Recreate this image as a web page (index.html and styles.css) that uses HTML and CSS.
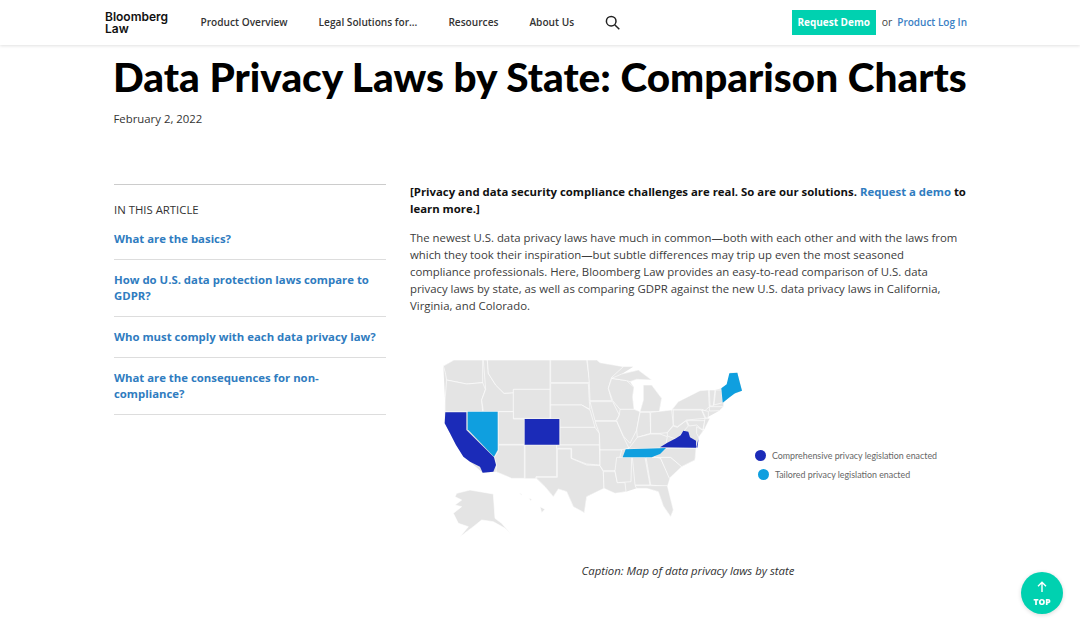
FILE: index.html
```html
<!DOCTYPE html>
<html lang="en">
<head>
<meta charset="utf-8">
<title>Data Privacy Laws by State: Comparison Charts</title>
<link rel="stylesheet" href="styles.css">
</head>
<body>
<header class="topbar">
  <a class="logo">Bloomberg<br>Law</a>
  <nav class="nav">
    <a>Product Overview</a>
    <a>Legal Solutions for...</a>
    <a>Resources</a>
    <a>About Us</a>
    <svg class="search" viewBox="0 0 16 16" width="16" height="16"><circle cx="6.2" cy="6.2" r="4.8"/><path d="M9.7 9.7l4.6 4.6"/></svg>
  </nav>
  <div class="actions">
    <a class="demo">Request Demo</a>
    <span class="or">or</span>
    <a class="login">Product Log In</a>
  </div>
</header>
<main class="page">
  <h1 class="title">Data Privacy Laws by State: Comparison Charts</h1>
  <p class="date">February 2, 2022</p>
  <div class="columns">
    <aside class="toc">
      <div class="toc-head">IN THIS ARTICLE</div>
      <a>What are the basics?</a>
      <a>How do U.S. data protection laws compare to GDPR?</a>
      <a>Who must comply with each data privacy law?</a>
      <a>What are the consequences for non-compliance?</a>
    </aside>
    <article class="article">
      <p class="lead">[Privacy and data security compliance challenges are real. So are our solutions. <a>Request a demo</a> to learn more.]</p>
      <p class="body">The newest U.S. data privacy laws have much in common—both with each other and with the laws from which they took their inspiration—but subtle differences may trip up even the most seasoned compliance professionals. Here, Bloomberg Law provides an easy-to-read comparison of U.S. data privacy laws by state, as well as comparing GDPR against the new U.S. data privacy laws in California, Virginia, and Colorado.</p>
      <figure class="figure">
        <div class="graphic">
          <svg class="map" viewBox="0 0 960 600" width="320" height="200">
            <path class="base" d="M40 48L72 30H500L510 38 580 50 610 50 575 72 625 60 665 90 620 88 600 95 612 112 608 140 612 178 630 185 640 150 640 105 665 105 695 145 688 185 725 180 745 155 810 122 855 120 875 115 897 100 900 68H922L936 122 905 135 880 158V170L868 182 835 200 825 235 806 262 798 295 795 330 755 350 718 385 712 410 730 480 722 500 700 468 685 425 650 415 620 415 588 425 555 430 522 415 470 440 463 488 430 470 410 425 385 417 370 440 345 410 318 385H245L198 365 158 368 120 335 78 285 44 220 45 150Z"/>
            <g class="st">
              <path d="M40 48L72 30H158V98L110 102 60 92 50 90 46 68Z"/>
              <path d="M50 90L60 92 110 102 158 98 166 118 155 150 158 185H45V150Z"/>
              <path d="M160 30H172L175 70 197 105 222 130 250 128V185H160L155 150 167 118Z"/>
              <path d="M172 30H360V118H250V128L222 130 197 105 175 70Z"/>
              <path d="M250 118H360V205H250Z"/>
              <path d="M205 185H250V207H283V283H205Z"/>
              <path d="M205 285H283V385H245L198 365 200 345 193 322 205 303Z"/>
              <path d="M285 285H380V380H318V386H285Z"/>
              <path d="M362 30H470L480 98H362Z"/>
              <path d="M362 100H475L478 155 480 178 455 165H362Z"/>
              <path d="M362 165H455L480 180 495 232H390V207H362Z"/>
              <path d="M390 232H495L508 250V285H390Z"/>
              <path d="M380 285H508L510 345 470 342 425 325V295H380Z"/>
              <path d="M382 297H423V325L470 345 510 347 520 365 522 415 470 440 463 488 430 470 410 425 385 417 370 440 345 410 320 385H318V382H382Z"/>
              <path d="M472 30H500L510 38 580 50 545 82 535 115 545 152H480L478 100Z"/>
              <path d="M480 155H548L568 195 558 212H495Z"/>
              <path d="M495 214H560L580 260 597 295 570 300H510L508 250Z"/>
              <path d="M510 300H575L565 340 555 362H520L510 347Z"/>
              <path d="M520 365H555L562 398H585L588 425 555 430 522 415Z"/>
              <path d="M545 85L590 92 612 112 608 140 612 178H570L548 152 535 115Z"/>
              <path d="M570 178H612L630 185 620 240 600 280 580 258 560 212 568 195Z"/>
              <path d="M575 72L625 60 665 90 620 88 600 95 590 92 545 85Z"/>
              <path d="M640 105L665 105 695 145 688 185H630L640 150Z"/>
              <path d="M630 187H660L662 250 622 262 620 240Z"/>
              <path d="M662 187 725 180 730 225 712 248 690 250 662 250Z"/>
              <path d="M597 295L622 262 662 252 690 252 712 260 708 282 690 294 587 298Z"/>
              <path d="M560 322H605L603 395 562 398 555 362Z"/>
              <path d="M607 322H645L660 405 615 405Z"/>
              <path d="M648 322H690L720 385 712 410 662 405Z"/>
              <path d="M615 407H712L730 480 722 500 700 468 685 425 650 415 620 415Z"/>
              <path d="M680 322H722L755 350 718 385 692 325Z"/>
              <path d="M670 322L708 295H798L795 330 755 350 722 322Z"/>
              <path d="M712 248 730 228 742 232 768 212 775 228 740 268 712 258Z"/>
              <path d="M730 180H815L825 205 770 210 742 230 730 226Z"/>
              <path d="M725 180 745 155 810 122 835 120 838 170 825 182 815 178H732Z"/>
              <path d="M770 212H825L818 240 800 225 778 228Z"/>
              <path d="M838 120H855L850 168H840Z"/>
              <path d="M857 120H875L878 158 852 165Z"/>
              <path d="M838 170H880L868 182 838 183Z"/>
              <path d="M816 180L835 184 835 200 828 205Z"/>
              <path d="M825 205H840L825 235 820 240Z"/>
              <path d="M800 230 820 242 806 262 800 250Z"/>
              <path d="M80 430L120 420 190 432 195 505 215 520 245 555 225 535 190 515 155 510 130 530 90 560 115 530 85 520 70 490 95 470 75 465 95 450 75 440Z"/>
              <path d="M268 430L276 432 274 436ZM296 444L306 448 302 452ZM330 470L345 478 335 488Z"/>
            </g>
            <path class="tl" d="M874 115L890 103 898 70 922 68 930 100 936 122 915 130 895 145 878 158Z"/>
            <path class="dk" d="M46 187H109V240L192 322 198 345 190 365 158 368 150 350 120 335 100 320 78 285 60 250 44 220Z"/>
            <path class="tl" d="M113 185H203V300L192 320 113 238Z"/>
            <path class="dk" d="M284 207H388V284H284Z"/>
            <path class="dk" d="M690 292L712 278 738 265 752 256 760 242 775 245 780 262 798 272 798 293Z"/>
            <path class="tl" d="M587 298 690 295 708 294 690 312 665 322H578Z"/>
            <path class="dk" d="M806 264L802 293 799 292Z"/>
          </svg>
          <ul class="legend">
            <li><span class="dot dot-dark"></span>Comprehensive privacy legislation enacted</li>
            <li class="legend-alt"><span class="dot dot-light"></span>Tailored privacy legislation enacted</li>
          </ul>
        </div>
        <figcaption class="caption">Caption: Map of data privacy laws by state</figcaption>
      </figure>
    </article>
  </div>
</main>
<a class="top-btn">
  <svg viewBox="0 0 12 12" width="12" height="12"><path d="M6 11V1.5M2 5.2L6 1.2l4 4"/></svg>
  <span>TOP</span>
</a>
</body>
</html>
```
FILE: styles.css
```css
* { box-sizing: border-box; }
html, body { margin: 0; height: 620px; overflow: hidden; }
body { background: #fff; color: #333; font-family: "Open Sans", sans-serif; font-size: 11.36px; }

.topbar {
  display: flex; align-items: center; height: 45px; padding: 0 113px 0 105px;
  background: #fff; box-shadow: 0 1px 3px rgba(0,0,0,.12);
}
.logo { font-family: Inter, sans-serif; font-weight: 600; font-size: 12px; line-height: 12px; color: #111; width: 95.5px; }
.nav { display: flex; align-items: center; gap: 31px; padding-bottom: 1px; font-size: 10.15px; font-weight: 600; color: #333; }
.search { fill: none; stroke: #222; stroke-width: 1.5; margin-top: 1px; }
.actions { display: flex; align-items: center; margin-left: auto; font-size: 10px; font-weight: 600; }
.demo { display: flex; align-items: center; height: 25px; padding: 0 5.7px 1px; background: #00d1b0; color: #fff; font-weight: 700; }
.or { margin: 0 5px 1px 6px; font-weight: 400; font-size: 10.5px; color: #444; }
.login { color: #3a80c4; margin-bottom: 1px; }

.page { margin-left: 114px; width: 852px; }
.title { margin: 7px 0 0 -1px; font-family: Lato, sans-serif; font-weight: 900; font-size: 40.5px; line-height: 50px; color: #000; white-space: nowrap; }
.date { margin: 8px 0 0 -0.5px; line-height: 17px; color: #333; }

.columns { display: grid; grid-template-columns: 272px 556px; column-gap: 24px; margin-top: 57px; }
.toc { display: flex; flex-direction: column; align-self: start; border-top: 1px solid #ccc; }
.toc-head { margin-top: 16px; line-height: 18px; color: #333; }
.toc a { padding: 12px 0; border-bottom: 1px solid #ddd; font-weight: 700; line-height: 16px; color: #2f7cc0; }

.article { margin-top: -1px; }
.article p { margin: 0; line-height: 17px; }
.lead { font-weight: 700; color: #111; }
.lead a { color: #2f7cc0; }
.article .body { margin-top: 12px; color: #3c3c3c; }

.figure { margin: 0; }
.graphic { display: flex; align-items: center; padding: 36px 0 0 20px; }
.map { flex: none; display: block; }
.map .base { fill: #e4e4e4; }
.map .st path { fill: #e4e4e4; stroke: #fff; stroke-width: 1.8; stroke-linejoin: round; }
.map .dk { fill: #1b2bb8; }
.map .tl { fill: #0f9fdf; }
.legend { list-style: none; margin: 29px 0 0 5px; padding: 0; font-family: Lato, sans-serif; font-size: 8.85px; color: #666; white-space: nowrap; }
.legend li { display: flex; align-items: center; height: 19px; }
.legend-alt { margin-left: 3px; }
.dot { width: 11px; height: 11px; border-radius: 50%; margin-right: 6px; }
.dot-dark { background: #1b2bb8; }
.dot-light { background: #0f9fdf; }
.caption { margin-top: 12px; text-align: center; font-style: italic; line-height: 17px; color: #333; }

.top-btn {
  position: fixed; left: 1021px; top: 572px; width: 42px; height: 42px; border-radius: 50%;
  background: #00d1b0; color: #fff; display: flex; flex-direction: column; align-items: center; justify-content: center;
  padding-top: 2px; font-size: 8.5px; font-weight: 800; line-height: 11px; box-shadow: 0 1px 4px rgba(0,0,0,.15);
}
.top-btn svg { fill: none; stroke: #fff; stroke-width: 1.4; margin-bottom: 3px; }
```
